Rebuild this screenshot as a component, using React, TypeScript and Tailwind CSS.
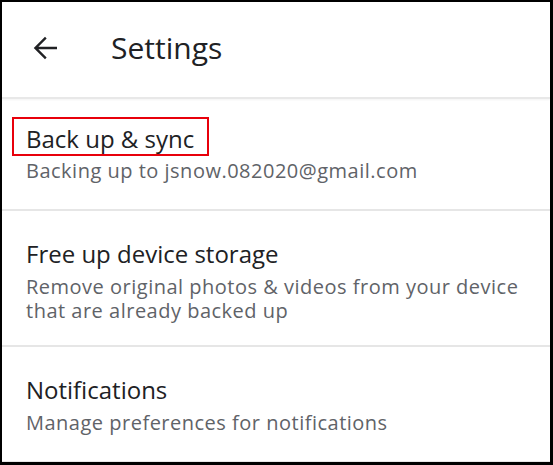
import React from 'react';

interface SettingItem {
    title: string;
    subtitle: string;
    highlighted?: boolean;
}

const items: SettingItem[] = [
    { title: 'Back up & sync', subtitle: 'Backing up to jsnow.082020@gmail.com', highlighted: true },
    {
        title: 'Free up device storage',
        subtitle: 'Remove original photos & videos from your device that are already backed up',
    },
    { title: 'Notifications', subtitle: 'Manage preferences for notifications' },
];

const App: React.FC = () => {
    return (
        <div
            className="w-[553px] h-[465px] bg-black pl-[2px] pt-[2px] pr-[3px] pb-[3px]"
            style={{ fontFamily: '"Open Sans", Roboto, sans-serif' }}
        >
            <div className="h-full bg-white flex flex-col">
                {/* Header */}
                <div className="h-[97px] pb-[3px] flex items-center shrink-0 border-b-[2px] border-[#e8e8e8] shadow-[0_1px_2px_rgba(0,0,0,0.05)]">
                    <svg className="ml-[25px] w-[36px] h-[36px] text-[#202124]" viewBox="0 0 24 24" fill="currentColor">
                        <path d="M20 11.1H7.6l5.5-5.5L12 4.5l-7.5 7.5 7.5 7.5 1.1-1.1-5.5-5.5H20v-1.8z" />
                    </svg>
                    <h1 className="ml-[48px] text-[30px] text-[#202124] leading-none">Settings</h1>
                </div>

                {/* Rows */}
                {items.map((item, i) => (
                    <div
                        key={item.title}
                        className={`pl-[24px] pr-[30px] flex flex-col border-[#e6e6e6] ${
                            i === 0 ? 'h-[112px] pt-[20px] border-b-[2px]' : i === 1 ? 'h-[136px] pt-[29px] border-b-[2px]' : 'h-[115px] pt-[29px] border-b'
                        }`}
                    >
                        <div className="self-start">
                            <span
                                className={`inline-block text-[24px] leading-[28px] text-[#202124] ${
                                    item.highlighted ? 'outline-2 outline-[#e8000b] -ml-[12px] pl-[12px] pr-[13px] pt-[6px] pb-[1px]' : ''
                                }`}
                            >
                                {item.title}
                            </span>
                        </div>
                        <p
                            className={`text-[20px] leading-[24px] tracking-[0.5px] text-[#5f6368] ${
                                item.highlighted ? 'mt-[5px]' : 'mt-[6px]'
                            }`}
                        >
                            {item.subtitle}
                        </p>
                    </div>
                ))}
            </div>
        </div>
    );
};

export default App;
